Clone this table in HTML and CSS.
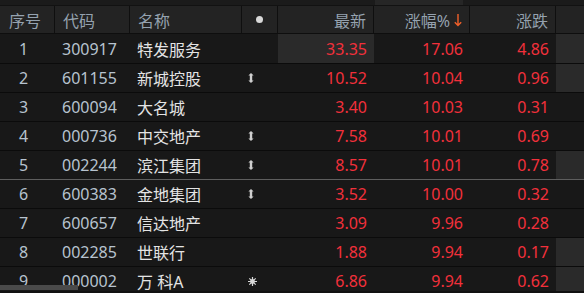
FILE: index.html
```html
<!DOCTYPE html>
<html lang="zh-CN">
<head>
<meta charset="utf-8">
<title>行情列表</title>
<link rel="stylesheet" href="styles.css">
</head>
<body>
<div class="screen">
  <div class="topbar"><div class="topbar-thumb"></div></div>
  <div class="line header">
    <div class="cell left idx-h">序号</div>
    <div class="cell left">代码</div>
    <div class="cell left">名称</div>
    <div class="cell center"><span class="dot"></span></div>
    <div class="cell right">最新</div>
    <div class="cell right">涨幅%<svg class="sort" width="8" height="14" viewBox="0 0 8 14"><path d="M4 1V12.5M0.8 9.2L4 12.6L7.2 9.2" fill="none" stroke="#f0602a" stroke-width="1.4"/></svg></div>
    <div class="cell right">涨跌</div>
    <div class="cell"></div>
  </div>

  <div class="line row first">
    <div class="cell idx">1</div><div class="cell code">300917</div><div class="cell name">特发服务</div><div class="cell mark"></div>
    <div class="cell num hl">33.35</div><div class="cell num">17.06</div><div class="cell num">4.86</div><div class="cell hl"></div>
  </div>
  <div class="line row">
    <div class="cell idx">2</div><div class="cell code">601155</div><div class="cell name">新城控股</div><div class="cell mark"><svg width="6" height="10" viewBox="0 0 6 10"><path d="M3 0L5.6 2.6H4.2V7.4H5.6L3 10L0.4 7.4H1.8V2.6H0.4Z" fill="#cfcfcf"/></svg></div>
    <div class="cell num">10.52</div><div class="cell num">10.04</div><div class="cell num">0.96</div><div class="cell hl"></div>
  </div>
  <div class="line row">
    <div class="cell idx">3</div><div class="cell code">600094</div><div class="cell name">大名城</div><div class="cell mark"></div>
    <div class="cell num">3.40</div><div class="cell num">10.03</div><div class="cell num">0.31</div><div class="cell"></div>
  </div>
  <div class="line row">
    <div class="cell idx">4</div><div class="cell code">000736</div><div class="cell name">中交地产</div><div class="cell mark"><svg width="6" height="10" viewBox="0 0 6 10"><path d="M3 0L5.6 2.6H4.2V7.4H5.6L3 10L0.4 7.4H1.8V2.6H0.4Z" fill="#cfcfcf"/></svg></div>
    <div class="cell num">7.58</div><div class="cell num">10.01</div><div class="cell num">0.69</div><div class="cell"></div>
  </div>
  <div class="line row split">
    <div class="cell idx">5</div><div class="cell code">002244</div><div class="cell name">滨江集团</div><div class="cell mark"><svg width="6" height="10" viewBox="0 0 6 10"><path d="M3 0L5.6 2.6H4.2V7.4H5.6L3 10L0.4 7.4H1.8V2.6H0.4Z" fill="#cfcfcf"/></svg></div>
    <div class="cell num">8.57</div><div class="cell num">10.01</div><div class="cell num">0.78</div><div class="cell hl"></div>
  </div>
  <div class="line row">
    <div class="cell idx">6</div><div class="cell code">600383</div><div class="cell name">金地集团</div><div class="cell mark"><svg width="6" height="10" viewBox="0 0 6 10"><path d="M3 0L5.6 2.6H4.2V7.4H5.6L3 10L0.4 7.4H1.8V2.6H0.4Z" fill="#cfcfcf"/></svg></div>
    <div class="cell num">3.52</div><div class="cell num">10.00</div><div class="cell num">0.32</div><div class="cell"></div>
  </div>
  <div class="line row">
    <div class="cell idx">7</div><div class="cell code">600657</div><div class="cell name">信达地产</div><div class="cell mark"></div>
    <div class="cell num">3.09</div><div class="cell num">9.96</div><div class="cell num">0.28</div><div class="cell"></div>
  </div>
  <div class="line row">
    <div class="cell idx">8</div><div class="cell code">002285</div><div class="cell name">世联行</div><div class="cell mark"></div>
    <div class="cell num">1.88</div><div class="cell num">9.94</div><div class="cell num">0.17</div><div class="cell hl"></div>
  </div>
  <div class="line row">
    <div class="cell idx">9</div><div class="cell code">000002</div><div class="cell name">万 科A</div><div class="cell mark"><svg width="9" height="9" viewBox="0 0 9 9"><g stroke="#d8d8d8" stroke-width="1.2"><path d="M4.5 0V9M0 4.5H9M1.3 1.3L7.7 7.7M7.7 1.3L1.3 7.7"/></g><circle cx="4.5" cy="4.5" r="2.4" fill="#d8d8d8"/></svg></div>
    <div class="cell num">6.86</div><div class="cell num">9.94</div><div class="cell num">0.62</div><div class="cell hl"></div>
  </div>

  <div class="hscroll"><div class="hscroll-thumb"></div></div>
</div>
</body>
</html>
```

FILE: styles.css
```css
html, body {
  margin: 0;
  padding: 0;
  background: #171717;
}

.screen {
  position: relative;
  width: 584px;
  height: 293px;
  overflow: hidden;
  background: #171717;
  font-family: "Noto Sans", "Noto Sans CJK SC", sans-serif;
  font-size: 16px;
}

.topbar {
  height: 5px;
  padding-left: 375px;
  background: #1b1b1b;
  border-bottom: 1px solid #121212;
}

.topbar-thumb {
  width: 88px;
  height: 5px;
  background: #262626;
}

.line {
  display: grid;
  grid-template-columns: 55px 75px 112px 36px 96px 96px 86px 28px;
}

.header {
  height: 27px;
  background: #232323;
  border-bottom: 1px solid #0e0e0e;
  color: #95a2af;
}

.header .cell {
  border-right: 1px solid #0f0f0f;
  display: flex;
  align-items: center;
  white-space: nowrap;
}

.header .cell:last-child {
  border-right: none;
}

.header .left { padding-left: 8px; }
.header .idx-h { padding-left: 9px; }
.header .center { justify-content: center; }
.header .right { justify-content: flex-end; padding-right: 7px; }

.dot {
  width: 7px;
  height: 7px;
  border-radius: 50%;
  background: #d9d9d9;
}

.sort {
  margin-left: 4px;
  margin-top: 1px;
}

.row {
  height: 28px;
  border-bottom: 1px solid #0b0b0b;
  background: #181818;
}

.row.first {
  height: 29px;
}

.row.split {
  border-bottom-color: #5e5e5e;
}

.row .cell {
  display: flex;
  align-items: center;
  white-space: nowrap;
}

.idx {
  padding-left: 19px;
  color: #b7c3cf;
}

.code {
  padding-left: 7px;
  color: #b7c3cf;
}

.name {
  padding-left: 7px;
  color: #e4e4e4;
}

.mark {
  padding-left: 6px;
}

.num {
  justify-content: flex-end;
  padding-right: 7px;
  color: #f2303b;
}

.hl {
  background: #2a2a2a;
}

.hscroll {
  position: absolute;
  left: 0;
  top: 285px;
  width: 584px;
  height: 8px;
  border-bottom: 2px solid #111111;
  box-sizing: border-box;
}

.hscroll-thumb {
  width: 78px;
  height: 5px;
  background: #4a4a4a;
}
```
